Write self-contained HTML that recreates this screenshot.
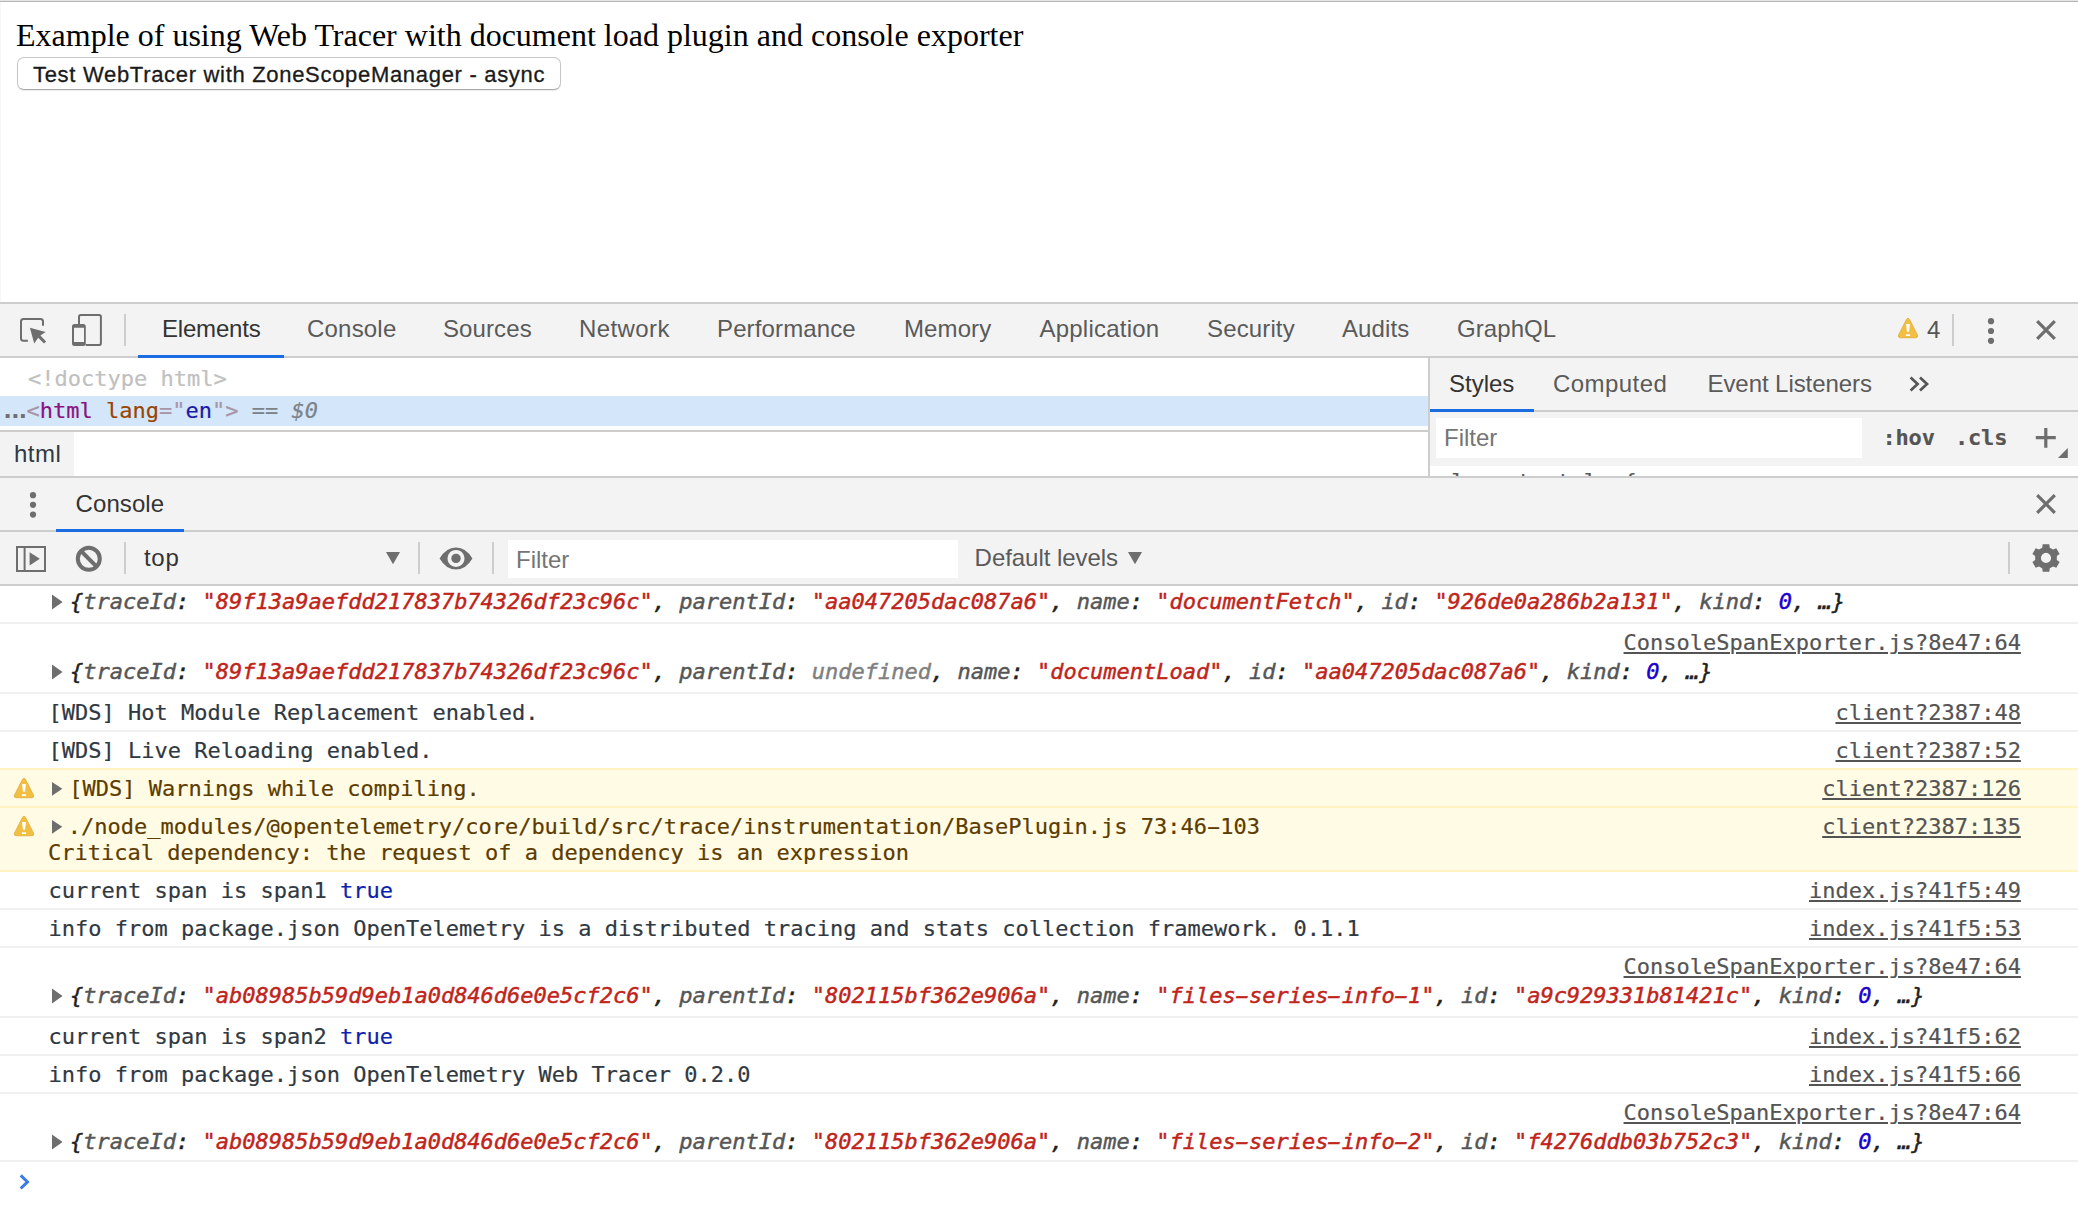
<!DOCTYPE html>
<html lang="en">
<head>
<meta charset="utf-8">
<title>Web Tracer example</title>
<style>
html,body{margin:0;padding:0;}
body{width:2078px;height:1224px;position:relative;overflow:hidden;background:#fff;
  font-family:"Liberation Sans",sans-serif;}
.abs{position:absolute;}
.sans{font-family:"Liberation Sans",sans-serif;font-size:24px;line-height:28px;white-space:pre;}
.mono{font-family:"DejaVu Sans Mono","Liberation Mono",monospace;font-size:22px;line-height:26px;white-space:pre;letter-spacing:0;-webkit-text-stroke:0.2px;}
.hy{display:inline-block;transform:scaleX(1.9);}
.hl{position:absolute;left:0;width:2078px;height:2px;background:#cdcdcd;}
.vdiv{position:absolute;width:2px;background:#cdcdcd;}
.bar{position:absolute;left:0;width:2078px;background:#f3f3f3;}
.tab{position:absolute;top:315px;color:#5a5a5a;}
.blue{position:absolute;height:3px;background:#196de0;}
svg{position:absolute;overflow:visible;}
/* console */
.row{position:absolute;left:0;width:2078px;border-bottom:2px solid #f0f0f0;box-sizing:border-box;background:#fff;}
.row.warn{background:#fffbe5;border-bottom-color:#fff5c2;}
.t{position:absolute;color:#303942;}
.warn .t{color:#5c3c00;}
.lnk{position:absolute;right:57.1px;color:#545454;text-decoration:underline;text-decoration-thickness:2px;text-underline-offset:2px;}
.o{font-style:italic;color:#212121;-webkit-text-stroke:0.45px;}
.k{color:#565656;}
.s{color:#c0241a;}
.n{color:#1c00cf;}
.u{color:#808080;}
.b{color:#0d22aa;}
</style>
</head>
<body>
<!-- page content -->
<div class="abs" style="left:0;top:0;width:2078px;height:1px;background:#e4e4e4;"></div>
<div class="abs" style="left:0;top:1px;width:2078px;height:1px;background:#b6b6b6;"></div>
<div class="abs" id="heading" style="left:16px;top:17px;font-family:'Liberation Serif',serif;font-size:32px;line-height:37px;color:#000;white-space:pre;">Example of using Web Tracer with document load plugin and console exporter</div>
<div class="abs" id="btn" style="left:17px;top:56.5px;width:543.5px;height:33.5px;box-sizing:border-box;border:1px solid #c6c6c6;border-bottom-color:#a9a9a9;border-radius:7px;background:#fff;box-shadow:0 1px 1px rgba(0,0,0,0.08);"></div>
<div class="abs" id="btntext" style="left:33px;top:61.6px;font-size:22px;line-height:26px;letter-spacing:0.69px;color:#1a1a1a;-webkit-text-stroke:0.3px;white-space:pre;">Test WebTracer with ZoneScopeManager - async</div>

<div class="abs" style="left:0;top:2px;width:1px;height:300px;background:#f7f7f7;"></div>
<!-- devtools main toolbar -->
<div class="hl" style="top:302px;"></div>
<div class="bar" style="top:304px;height:52px;"></div>
<div class="hl" style="top:356px;"></div>
<div class="blue" style="left:138px;top:355px;width:146px;"></div>
<div class="vdiv" style="left:124px;top:314px;height:32px;"></div>
<div class="sans tab" style="left:162px;letter-spacing:-0.2px;color:#333;">Elements</div>
<div class="sans tab" style="left:307px;letter-spacing:0.2px;">Console</div>
<div class="sans tab" style="left:443px;letter-spacing:0.1px;">Sources</div>
<div class="sans tab" style="left:579px;letter-spacing:0.4px;">Network</div>
<div class="sans tab" style="left:717px;letter-spacing:0.13px;">Performance</div>
<div class="sans tab" style="left:904px;letter-spacing:0.1px;">Memory</div>
<div class="sans tab" style="left:1039.5px;letter-spacing:0.22px;">Application</div>
<div class="sans tab" style="left:1207px;letter-spacing:0.14px;">Security</div>
<div class="sans tab" style="left:1342px;letter-spacing:0.1px;">Audits</div>
<div class="sans tab" style="left:1457px;letter-spacing:0.08px;">GraphQL</div>
<div class="sans tab" style="left:1927px;top:316px;color:#555;">4</div>
<div class="vdiv" style="left:1952px;top:314px;height:32px;"></div>



<!-- elements panel -->
<div class="abs mono" style="left:28px;top:366px;color:#c0c0c0;">&lt;!doctype html&gt;</div>
<div class="abs" style="left:0;top:396px;width:1428px;height:30px;background:#d3e6fa;"></div>
<div class="abs mono" style="left:1px;top:397.6px;color:#a894a6;"><span style="color:#6e6e6e;letter-spacing:-5.6px;font-weight:bold;">...</span><span style="letter-spacing:0;margin-left:2.5px;">&lt;</span><span style="color:#881280;">html</span> <span style="color:#994500;">lang</span>="<span style="color:#1a1aa6;">en</span>"&gt;<span style="color:#7b8288;"> == <i>$0</i></span></div>
<div class="abs" style="left:0;top:430px;width:1428px;height:2px;background:#cdcdcd;"></div>
<div class="abs" style="left:0;top:432px;width:74px;height:44px;background:#f3f3f3;"></div>
<div class="abs sans" style="left:14px;top:440px;color:#303942;letter-spacing:0.5px;">html</div>

<!-- styles pane -->
<div class="vdiv" style="left:1428px;top:358px;height:118px;"></div>
<div class="abs" style="left:1430px;top:358px;width:648px;height:52px;background:#f3f3f3;"></div>
<div class="abs" style="left:1430px;top:410px;width:648px;height:2px;background:#cdcdcd;"></div>
<div class="blue" style="left:1430px;top:409px;width:104px;"></div>
<div class="abs sans" style="left:1449px;top:370px;color:#333;">Styles</div>
<div class="abs sans" style="left:1553px;top:370px;color:#5a5a5a;letter-spacing:0.45px;">Computed</div>
<div class="abs sans" style="left:1707.5px;top:370px;color:#5a5a5a;letter-spacing:-0.07px;">Event Listeners</div>
<div class="abs" style="left:1430px;top:412px;width:648px;height:54px;background:#f3f3f3;"></div>
<div class="abs" style="left:1436px;top:418px;width:426px;height:40px;background:#fff;"></div>
<div class="abs sans" style="left:1444px;top:424px;color:#757575;">Filter</div>
<div class="abs mono" style="left:1882.5px;top:425px;color:#555;font-weight:bold;letter-spacing:-0.2px;">:hov</div>
<div class="abs mono" style="left:1955px;top:425px;color:#555;font-weight:bold;letter-spacing:-0.2px;">.cls</div>
<div class="abs" style="left:1430px;top:466px;width:648px;height:10px;overflow:hidden;background:#fff;"><div class="mono" style="position:absolute;left:8px;top:3px;color:#5a5a5a;">element.style {</div></div>



<!-- console drawer header -->
<div class="hl" style="top:476px;"></div>
<div class="bar" style="top:478px;height:52px;"></div>
<div class="hl" style="top:530px;"></div>
<div class="blue" style="left:56px;top:529px;width:128px;"></div>
<div class="abs sans" style="left:75.5px;top:490px;color:#333;letter-spacing:0.1px;">Console</div>

<!-- console toolbar -->
<div class="bar" style="top:532px;height:52px;"></div>
<div class="hl" style="top:584px;"></div>
<div class="vdiv" style="left:124px;top:542px;height:32px;"></div>
<div class="abs sans" style="left:144px;top:543.5px;color:#333;letter-spacing:0.7px;">top</div>
<div class="vdiv" style="left:418px;top:542px;height:32px;"></div>
<div class="vdiv" style="left:492px;top:542px;height:32px;"></div>
<div class="abs" style="left:508px;top:540px;width:450px;height:38px;background:#fff;"></div>
<div class="abs sans" style="left:516px;top:546px;color:#757575;">Filter</div>
<div class="abs sans" style="left:974.6px;top:543.7px;color:#5a5a5a;letter-spacing:-0.05px;">Default levels</div>
<div class="vdiv" style="left:2008px;top:542px;height:32px;"></div>


<svg style="left:0;top:0;" width="2078" height="600" viewBox="0 0 2078 600">
 <!-- inspect icon -->
 <path d="M43 325.8 V321.5 Q43 319 40.5 319 H23.5 Q21 319 21 321.5 V338.3 Q21 340.8 23.5 340.8 H27.9" fill="none" stroke="#6e6e6e" stroke-width="2"/>
 <path d="M29.9 327.8 L45.7 332 L40.4 335.4 L46.1 341.4 L44 343.5 L38.2 337.7 L34.2 343.4 Z" fill="#6e6e6e"/>
 <!-- device icon -->
 <path d="M79 324 V316.8 Q79 315 80.8 315 H99.1 Q100.9 315 100.9 316.8 V343.2 Q100.9 345 99.1 345 H85.7" fill="none" stroke="#6e6e6e" stroke-width="2"/>
 <path d="M74.5 324 H83.3 Q85.8 324 85.8 326.5 V343.5 Q85.8 346 83.3 346 H74.5 Q72 346 72 343.5 V326.5 Q72 324 74.5 324 Z M74 327.8 V342 H84 V327.8 Z" fill="#6e6e6e" fill-rule="evenodd"/>
 <!-- warning counter icon -->
 <g transform="translate(1898,318)"><path d="M10 0.3 Q11 0.3 11.6 1.5 L19.5 17 Q20.3 19.6 18 19.8 L2 19.8 Q-0.3 19.6 0.5 17 L8.4 1.5 Q9 0.3 10 0.3 Z" fill="#f2bf42" stroke="#dda932" stroke-width="0.7"/><path d="M8.1 6 L11.9 6 L11.1 13.8 L8.9 13.8 Z M7.9 16.2 H12.1 V18.1 H7.9 Z" fill="#fff"/></g>
 <!-- main menu dots -->
 <circle cx="1991" cy="321.2" r="3.1" fill="#6e6e6e"/><circle cx="1991" cy="331" r="3.1" fill="#6e6e6e"/><circle cx="1991" cy="340.8" r="3.1" fill="#6e6e6e"/>
 <!-- main close -->
 <path d="M2037.2 321.2 L2054.8 338.8 M2054.8 321.2 L2037.2 338.8" stroke="#6e6e6e" stroke-width="3.2" fill="none"/>
 <!-- styles: chevrons, plus -->
 <path d="M1910.6 377.6 L1917.6 384 L1910.6 390.4 M1920 377.6 L1927 384 L1920 390.4" stroke="#555" stroke-width="2.7" fill="none"/>
 <path d="M2035.8 437.6 H2055.8 M2045.8 428 V447.8" stroke="#6e6e6e" stroke-width="3.2" fill="none"/>
 <path d="M2067.8 448 V458 H2058 Z" fill="#6e6e6e"/>
 <!-- drawer dots, close -->
 <circle cx="33" cy="495.2" r="3.1" fill="#6e6e6e"/><circle cx="33" cy="504.8" r="3.1" fill="#6e6e6e"/><circle cx="33" cy="514.6" r="3.1" fill="#6e6e6e"/>
 <path d="M2037.2 495.2 L2054.8 512.8 M2054.8 495.2 L2037.2 512.8" stroke="#6e6e6e" stroke-width="3.2" fill="none"/>
 <!-- console sidebar icon -->
 <rect x="17" y="547" width="28" height="24" fill="none" stroke="#6e6e6e" stroke-width="2"/>
 <path d="M24.6 547 V571" stroke="#6e6e6e" stroke-width="2"/>
 <path d="M29.6 552.2 L39.8 558.8 L29.6 565.4 Z" fill="#6e6e6e"/>
 <!-- clear icon -->
 <circle cx="88.8" cy="558.8" r="11" fill="none" stroke="#6e6e6e" stroke-width="4"/>
 <path d="M81 551 L96.6 566.6" stroke="#6e6e6e" stroke-width="4"/>
 <!-- context dropdown arrow -->
 <path d="M386 552 H400 L393 564.2 Z" fill="#6e6e6e"/>
 <!-- eye icon -->
 <path d="M439.6 558.4 Q446 547.4 456 547.4 Q466 547.4 472.4 558.4 Q466 569.4 456 569.4 Q446 569.4 439.6 558.4 Z M456 549.9 a8.5 8.5 0 1 0 0.01 0 Z" fill="#6e6e6e" fill-rule="evenodd"/>
 <circle cx="456" cy="558.4" r="4.7" fill="#6e6e6e"/>
 <!-- levels arrow -->
 <path d="M1128 552 H1142 L1135 564.2 Z" fill="#6e6e6e"/>
 <!-- gear -->
 <path d="M2042.24 547.66 L2042.69 544.19 L2049.31 544.19 L2049.76 547.66 L2053.07 549.57 L2056.30 548.23 L2059.62 553.97 L2056.83 556.09 L2056.83 559.91 L2059.62 562.03 L2056.30 567.77 L2053.07 566.43 L2049.76 568.34 L2049.31 571.81 L2042.69 571.81 L2042.24 568.34 L2038.93 566.43 L2035.70 567.77 L2032.38 562.03 L2035.17 559.91 L2035.17 556.09 L2032.38 553.97 L2035.70 548.23 L2038.93 549.57 Z M2040.90 558.00 a5.10 5.10 0 1 0 10.20 0 a5.10 5.10 0 1 0 -10.20 0 Z" fill="#6e6e6e" fill-rule="evenodd"/>
</svg>



<!-- console rows -->
<div class="row" style="top:586px;height:38px;">
  <svg style="left:52px;top:8px;" width="11" height="16" viewBox="0 0 11 16"><path d="M0 0.5 L10.6 8 L0 15.5 Z" fill="#6e6e6e"/></svg>
  <div class="t mono o" style="left:70px;top:3px;">{<span class="k">traceId</span>: <span class="s">"89f13a9aefdd217837b74326df23c96c"</span>, <span class="k">parentId</span>: <span class="s">"aa047205dac087a6"</span>, <span class="k">name</span>: <span class="s">"documentFetch"</span>, <span class="k">id</span>: <span class="s">"926de0a286b2a131"</span>, <span class="k">kind</span>: <span class="n">0</span>, …}</div>
</div>
<div class="row" style="top:624px;height:70px;">
  <div class="lnk mono" style="top:6px;">ConsoleSpanExporter.js?8e47:64</div>
  <svg style="left:52px;top:40px;" width="11" height="16" viewBox="0 0 11 16"><path d="M0 0.5 L10.6 8 L0 15.5 Z" fill="#6e6e6e"/></svg>
  <div class="t mono o" style="left:70px;top:35px;">{<span class="k">traceId</span>: <span class="s">"89f13a9aefdd217837b74326df23c96c"</span>, <span class="k">parentId</span>: <span class="u">undefined</span>, <span class="k">name</span>: <span class="s">"documentLoad"</span>, <span class="k">id</span>: <span class="s">"aa047205dac087a6"</span>, <span class="k">kind</span>: <span class="n">0</span>, …}</div>
</div>
<div class="row" style="top:694px;height:38px;">
  <div class="t mono" style="left:48.5px;top:5.5px;">[WDS] Hot Module Replacement enabled.</div>
  <div class="lnk mono" style="top:6px;">client?2387:48</div>
</div>
<div class="row" style="top:732px;height:38px;border-bottom-color:#fff5c2;">
  <div class="t mono" style="left:48.5px;top:5.5px;">[WDS] Live Reloading enabled.</div>
  <div class="lnk mono" style="top:6px;">client?2387:52</div>
</div>
<div class="row warn" style="top:770px;height:38px;">
  <svg class="wi" style="left:14px;top:8px;" width="20" height="20" viewBox="0 0 20 20"><path d="M10 0.3 Q11 0.3 11.6 1.5 L19.5 17 Q20.3 19.6 18 19.8 L2 19.8 Q-0.3 19.6 0.5 17 L8.4 1.5 Q9 0.3 10 0.3 Z" fill="#f2bf42" stroke="#dda932" stroke-width="0.7"/><path d="M8.1 6 L11.9 6 L11.1 13.8 L8.9 13.8 Z M7.9 16.2 H12.1 V18.1 H7.9 Z" fill="#fff"/></svg>
  <svg style="left:52px;top:12.2px;" width="11" height="16" viewBox="0 0 11 16"><path d="M0 0 L10.3 6.85 L0 13.7 Z" fill="#6e6e6e"/></svg>
  <div class="t mono" style="left:69.2px;top:5.5px;">[WDS] Warnings while compiling.</div>
  <div class="lnk mono" style="top:6px;">client?2387:126</div>
</div>
<div class="row warn" style="top:808px;height:64px;">
  <svg class="wi" style="left:14px;top:8px;" width="20" height="20" viewBox="0 0 20 20"><path d="M10 0.3 Q11 0.3 11.6 1.5 L19.5 17 Q20.3 19.6 18 19.8 L2 19.8 Q-0.3 19.6 0.5 17 L8.4 1.5 Q9 0.3 10 0.3 Z" fill="#f2bf42" stroke="#dda932" stroke-width="0.7"/><path d="M8.1 6 L11.9 6 L11.1 13.8 L8.9 13.8 Z M7.9 16.2 H12.1 V18.1 H7.9 Z" fill="#fff"/></svg>
  <svg style="left:52px;top:12.2px;" width="11" height="16" viewBox="0 0 11 16"><path d="M0 0 L10.3 6.85 L0 13.7 Z" fill="#6e6e6e"/></svg>
  <div class="t mono" style="left:67.8px;top:5.5px;">./node_modules/@opentelemetry/core/build/src/trace/instrumentation/BasePlugin.js 73:46<span class="hy">-</span>103</div>
  <div class="t mono" style="left:48px;top:31.5px;">Critical dependency: the request of a dependency is an expression</div>
  <div class="lnk mono" style="top:6px;">client?2387:135</div>
</div>
<div class="row" style="top:872px;height:38px;">
  <div class="t mono" style="left:48.5px;top:5.5px;">current span is span1 <span class="b">true</span></div>
  <div class="lnk mono" style="top:6px;">index.js?41f5:49</div>
</div>
<div class="row" style="top:910px;height:38px;">
  <div class="t mono" style="left:48.5px;top:5.5px;">info from package.json OpenTelemetry is a distributed tracing and stats collection framework. 0.1.1</div>
  <div class="lnk mono" style="top:6px;">index.js?41f5:53</div>
</div>
<div class="row" style="top:948px;height:70px;">
  <div class="lnk mono" style="top:6px;">ConsoleSpanExporter.js?8e47:64</div>
  <svg style="left:52px;top:40px;" width="11" height="16" viewBox="0 0 11 16"><path d="M0 0.5 L10.6 8 L0 15.5 Z" fill="#6e6e6e"/></svg>
  <div class="t mono o" style="left:70px;top:35px;">{<span class="k">traceId</span>: <span class="s">"ab08985b59d9eb1a0d846d6e0e5cf2c6"</span>, <span class="k">parentId</span>: <span class="s">"802115bf362e906a"</span>, <span class="k">name</span>: <span class="s">"files<span class="hy">-</span>series<span class="hy">-</span>info<span class="hy">-</span>1"</span>, <span class="k">id</span>: <span class="s">"a9c929331b81421c"</span>, <span class="k">kind</span>: <span class="n">0</span>, …}</div>
</div>
<div class="row" style="top:1018px;height:38px;">
  <div class="t mono" style="left:48.5px;top:5.5px;">current span is span2 <span class="b">true</span></div>
  <div class="lnk mono" style="top:6px;">index.js?41f5:62</div>
</div>
<div class="row" style="top:1056px;height:38px;">
  <div class="t mono" style="left:48.5px;top:5.5px;">info from package.json OpenTelemetry Web Tracer 0.2.0</div>
  <div class="lnk mono" style="top:6px;">index.js?41f5:66</div>
</div>
<div class="row" style="top:1094px;height:68px;">
  <div class="lnk mono" style="top:6px;">ConsoleSpanExporter.js?8e47:64</div>
  <svg style="left:52px;top:40px;" width="11" height="16" viewBox="0 0 11 16"><path d="M0 0.5 L10.6 8 L0 15.5 Z" fill="#6e6e6e"/></svg>
  <div class="t mono o" style="left:70px;top:35px;">{<span class="k">traceId</span>: <span class="s">"ab08985b59d9eb1a0d846d6e0e5cf2c6"</span>, <span class="k">parentId</span>: <span class="s">"802115bf362e906a"</span>, <span class="k">name</span>: <span class="s">"files<span class="hy">-</span>series<span class="hy">-</span>info<span class="hy">-</span>2"</span>, <span class="k">id</span>: <span class="s">"f4276ddb03b752c3"</span>, <span class="k">kind</span>: <span class="n">0</span>, …}</div>
</div>
<svg id="prompt" style="left:19px;top:1174px;" width="12" height="16" viewBox="0 0 12 16"><path d="M1.7 1.3 L8.5 7.9 L1.7 14.5" fill="none" stroke="#3b7be8" stroke-width="3"/></svg>


</body>
</html>
